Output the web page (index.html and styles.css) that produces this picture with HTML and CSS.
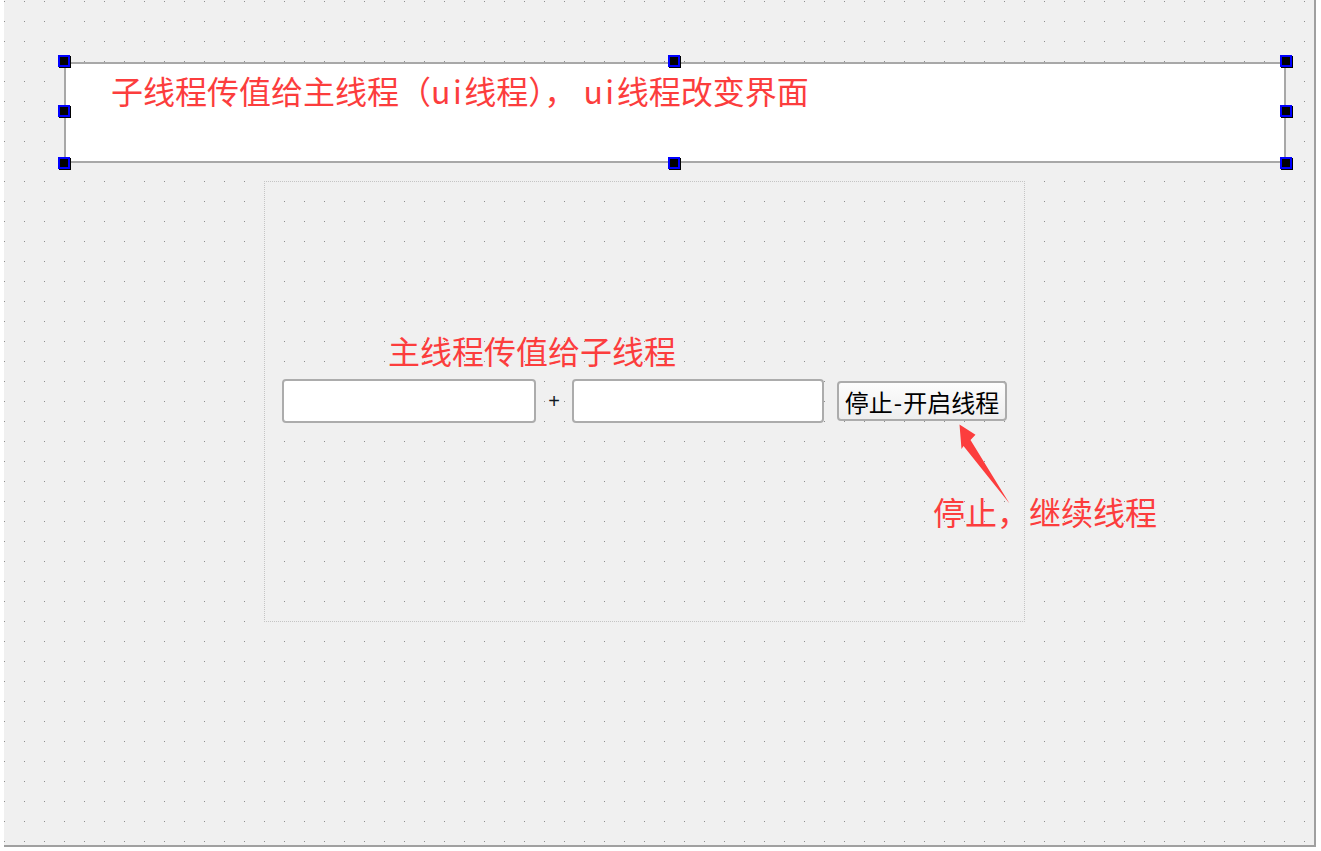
FILE: index.html
```html
<!DOCTYPE html>
<html lang="zh-CN">
<head>
<meta charset="utf-8">
<title>Form</title>
<link rel="stylesheet" href="styles.css">
</head>
<body>
<div class="canvas">
  <div class="title">
    子线程传值给主线程（<span class="latin">ui</span>线程），&nbsp;<span class="latin">ui</span>线程改变界面
    <span class="handle h-tl"></span>
    <span class="handle h-tm"></span>
    <span class="handle h-tr"></span>
    <span class="handle h-ml"></span>
    <span class="handle h-mr"></span>
    <span class="handle h-bl"></span>
    <span class="handle h-bm"></span>
    <span class="handle h-br"></span>
  </div>
  <div class="layout">
    <div class="hint">主线程传值给子线程</div>
    <div class="row">
      <div class="edit"></div>
      <div class="plus">+</div>
      <div class="edit edit-2"></div>
      <div class="btn">停止<span class="dash">-</span>开启线程</div>
    </div>
  </div>
  <div class="note">停止，继续线程</div>
  <svg class="arrow" width="70" height="95" viewBox="950 415 70 95">
    <polygon points="959.5,424.5 975.5,434.8 970.5,440 1009.5,503.5 963.5,446 961.5,449" fill="#fc3d3d"/>
  </svg>
</div>
</body>
</html>
```
FILE: styles.css
```css
html, body {
  margin: 0;
  padding: 0;
}
body {
  background: #ffffff;
  width: 1321px;
  height: 851px;
  overflow: hidden;
  font-family: "Noto Sans CJK SC", "Noto Sans", sans-serif;
}
.canvas {
  position: relative;
  box-sizing: border-box;
  margin-left: 4px;
  width: 1312px;
  height: 847px;
  padding: 62px 0 0 60px;
  border-right: 2px solid #a0a0a0;
  border-bottom: 2px solid #a0a0a0;
  background-color: #f0f0f0;
  background-image: conic-gradient(from 270deg at 1px 1px, #8e8e8e 0 25%, transparent 0 100%);
  background-size: 20px 20px;
  background-position: 0 1px;
}
.title {
  position: relative;
  box-sizing: border-box;
  width: 1222px;
  height: 101px;
  border: 2px solid #a8a8a8;
  background: #ffffff;
  padding: 3px 0 0 45px;
  font-size: 32px;
  line-height: 46px;
  color: #fc3d3d;
  white-space: nowrap;
}
.latin {
  letter-spacing: 2.5px;
}
.handle {
  position: absolute;
  box-sizing: border-box;
  width: 12px;
  height: 12px;
  background: #000000;
  border: 2px solid #0000ff;
  box-shadow: 1px 1px 0 #000000;
}
.h-tl { left: -8px; top: -9px; }
.h-tm { left: 602px; top: -9px; }
.h-tr { left: 1214px; top: -9px; }
.h-ml { left: -8px; top: 41px; }
.h-mr { left: 1214px; top: 41px; }
.h-bl { left: -8px; top: 93px; }
.h-bm { left: 602px; top: 93px; }
.h-br { left: 1214px; top: 93px; }
.layout {
  box-sizing: border-box;
  margin: 18px 0 0 200px;
  width: 761px;
  height: 441px;
  border: 1px dotted #c4c4c4;
  padding: 145px 0 0 17px;
}
.hint {
  margin-left: 106px;
  font-size: 32px;
  line-height: 46px;
  color: #fc3d3d;
  white-space: nowrap;
}
.row {
  margin-top: 6px;
  display: flex;
  align-items: center;
  height: 44px;
}
.edit {
  box-sizing: border-box;
  width: 254px;
  height: 44px;
  border: 2px solid #acacac;
  border-radius: 4px;
  background: #ffffff;
}
.edit-2 {
  width: 252px;
}
.plus {
  width: 36px;
  text-align: center;
  font-family: "Liberation Sans", sans-serif;
  font-size: 20px;
  line-height: 1;
  color: #101820;
}
.btn {
  box-sizing: border-box;
  margin-left: 13px;
  width: 170px;
  height: 40px;
  border: 2px solid #acacac;
  border-radius: 4px;
  background: linear-gradient(#fdfdfd, #eeeeee);
  display: flex;
  align-items: center;
  justify-content: center;
  font-size: 24px;
  color: #000000;
  white-space: nowrap;
}
.dash {
  margin: 0 1px;
}
.note {
  position: absolute;
  left: 929px;
  top: 488px;
  font-size: 32px;
  line-height: 46px;
  color: #fc3d3d;
  white-space: nowrap;
}
.arrow {
  position: absolute;
  left: 946px;
  top: 415px;
}
```
